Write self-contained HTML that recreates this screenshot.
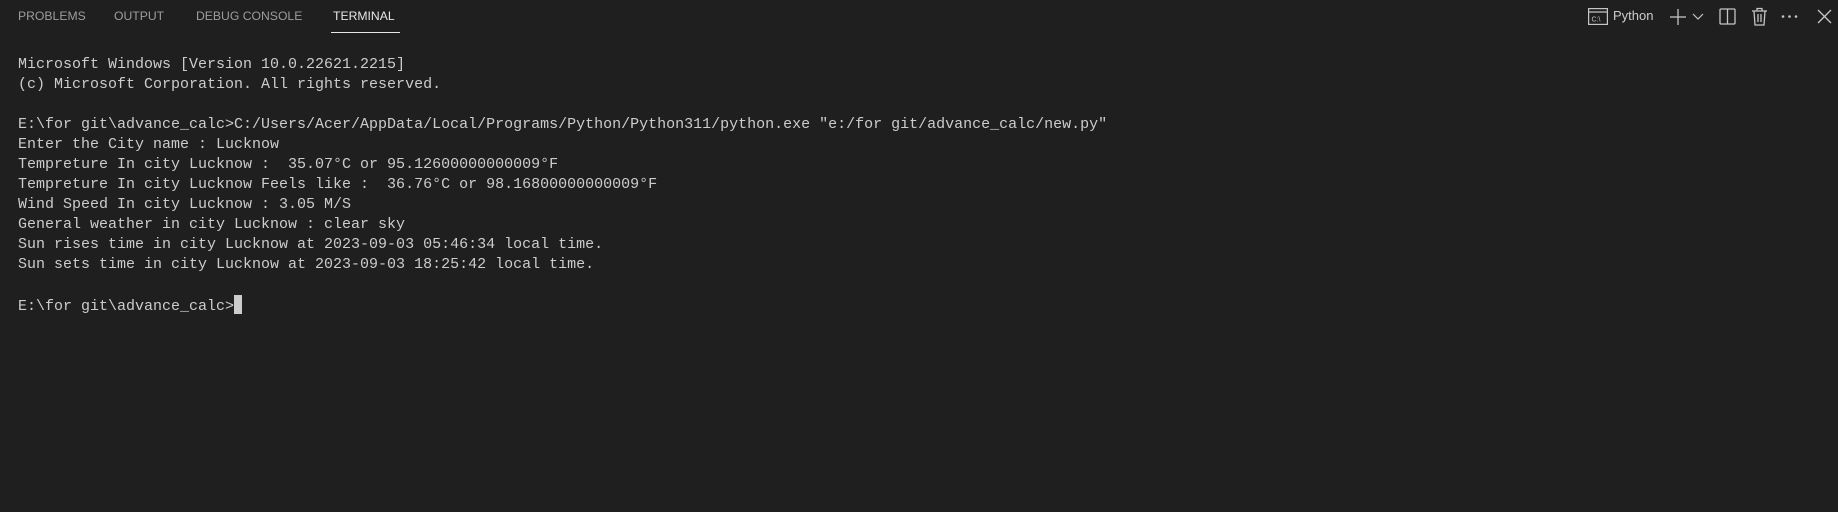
<!DOCTYPE html>
<html><head><meta charset="utf-8"><style>
html,body{margin:0;padding:0;background:#1f1f1f;width:1838px;height:512px;overflow:hidden}
.tabs{position:absolute;top:0;left:0;height:33px;font-family:"Liberation Sans",sans-serif;font-size:12.2px;color:#9d9d9d}
.tab{position:absolute;top:9px;white-space:nowrap}
.act{color:#e7e7e7}
.ul{position:absolute;left:331px;top:32px;width:69px;height:1px;background:#e7e7e7}
pre{position:absolute;left:18px;top:55px;margin:0;font-family:"Liberation Mono",monospace;font-size:15px;letter-spacing:0;line-height:20px;color:#cccccc}
.cur{display:inline-block;width:8px;height:19px;background:#cccccc;vertical-align:-4px}
svg{position:absolute}
</style></head><body>
<div class="tabs">
<div class="tab" style="left:18px">PROBLEMS</div>
<div class="tab" style="left:114px">OUTPUT</div>
<div class="tab" style="left:196px">DEBUG CONSOLE</div>
<div class="tab act" style="left:333px">TERMINAL</div>
<div class="ul"></div>
</div>
<svg style="left:1588px;top:8px" width="20" height="17" viewBox="0 0 20 17" fill="none" stroke="#c5c5c5" stroke-width="1.2"><rect x="0.6" y="0.6" width="18.8" height="15.8"/><line x1="1" y1="4" x2="19" y2="4"/><text x="3.5" y="13.5" font-family="Liberation Sans" font-size="7" fill="#c5c5c5" stroke="none">C:\</text></svg>
<div style="position:absolute;left:1613px;top:8px;font-family:'Liberation Sans',sans-serif;font-size:13px;color:#cccccc">Python</div>
<svg style="left:1668px;top:7px" width="20" height="20" stroke="#c5c5c5" stroke-width="1.3" fill="none"><line x1="10" y1="2" x2="10" y2="18"/><line x1="2" y1="10" x2="18" y2="10"/></svg>
<svg style="left:1692px;top:11px" width="12" height="10" stroke="#c5c5c5" stroke-width="1.2" fill="none"><path d="M1 3 L6 8 L11 3"/></svg>
<svg style="left:1719px;top:8px" width="18" height="18" stroke="#c5c5c5" stroke-width="1.3" fill="none"><rect x="1" y="1" width="15" height="15" rx="1"/><line x1="8.5" y1="1" x2="8.5" y2="16"/></svg>
<svg style="left:1751px;top:7px" width="17" height="19" stroke="#c5c5c5" stroke-width="1.3" fill="none"><path d="M1 4H16M6 4V1.5H11V4M3 4L4 18H13L14 4M7 7V15M10 7V15"/></svg>
<svg style="left:1781px;top:14px" width="18" height="5" fill="#c5c5c5"><circle cx="2" cy="2.5" r="1.3"/><circle cx="8.5" cy="2.5" r="1.3"/><circle cx="15" cy="2.5" r="1.3"/></svg>
<svg style="left:1817px;top:9px" width="15" height="15" stroke="#c5c5c5" stroke-width="1.3"><line x1="1" y1="1" x2="14" y2="14"/><line x1="14" y1="1" x2="1" y2="14"/></svg>
<pre>Microsoft Windows [Version 10.0.22621.2215]
(c) Microsoft Corporation. All rights reserved.

E:\for git\advance_calc>C:/Users/Acer/AppData/Local/Programs/Python/Python311/python.exe "e:/for git/advance_calc/new.py"
Enter the City name : Lucknow
Tempreture In city Lucknow :  35.07°C or 95.12600000000009°F
Tempreture In city Lucknow Feels like :  36.76°C or 98.16800000000009°F
Wind Speed In city Lucknow : 3.05 M/S
General weather in city Lucknow : clear sky
Sun rises time in city Lucknow at 2023-09-03 05:46:34 local time.
Sun sets time in city Lucknow at 2023-09-03 18:25:42 local time.

E:\for git\advance_calc&gt;<span class="cur"></span></pre>
</body></html>
